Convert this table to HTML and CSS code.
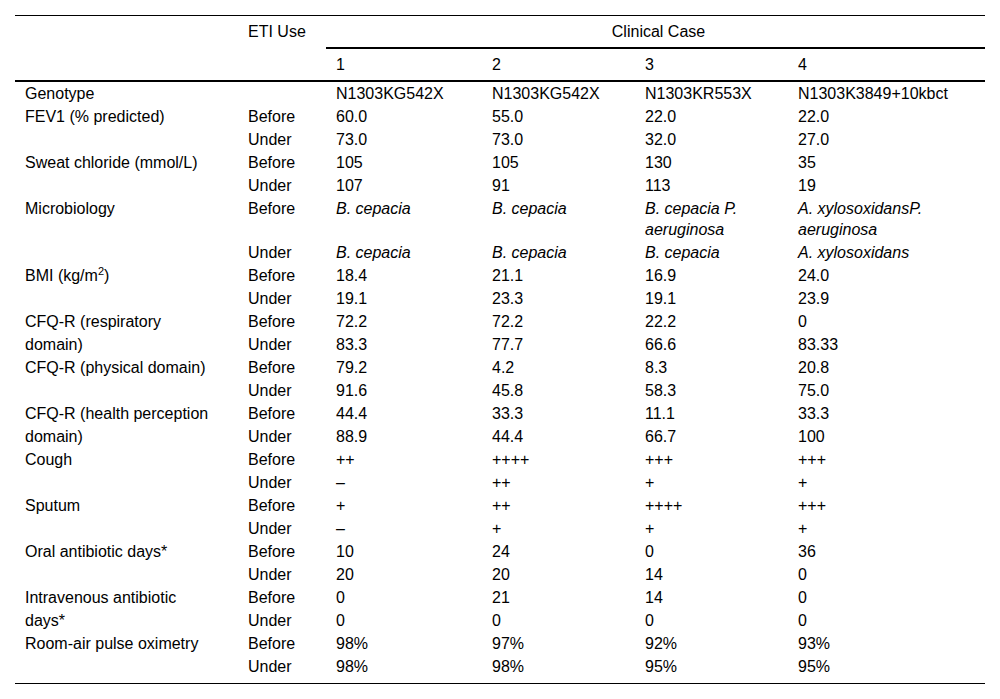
FILE: index.html
```html
<!DOCTYPE html>
<html>
<head>
<meta charset="utf-8">
<link rel="stylesheet" href="styles.css">
</head>
<body>
<div class="wrap">
<table class="data">
  <colgroup>
    <col class="c1"><col class="c2"><col class="c3"><col class="c4"><col class="c5"><col class="c6">
  </colgroup>
  <thead>
    <tr>
      <th rowspan="2" class="hcell"></th>
      <th rowspan="2" class="hcell">ETI Use</th>
      <th colspan="4" class="hcell case">Clinical Case</th>
    </tr>
    <tr>
      <th class="hcell num">1</th>
      <th class="hcell num">2</th>
      <th class="hcell num">3</th>
      <th class="hcell num">4</th>
    </tr>
  </thead>
  <tbody>
    <tr><td>Genotype</td><td></td><td>N1303KG542X</td><td>N1303KG542X</td><td>N1303KR553X</td><td>N1303K3849+10kbct</td></tr>

    <tr><td rowspan="2">FEV1 (% predicted)</td><td>Before</td><td>60.0</td><td>55.0</td><td>22.0</td><td>22.0</td></tr>
    <tr><td>Under</td><td>73.0</td><td>73.0</td><td>32.0</td><td>27.0</td></tr>

    <tr><td rowspan="2">Sweat chloride (mmol/L)</td><td>Before</td><td>105</td><td>105</td><td>130</td><td>35</td></tr>
    <tr><td>Under</td><td>107</td><td>91</td><td>113</td><td>19</td></tr>

    <tr><td rowspan="2">Microbiology</td><td>Before</td><td><i>B. cepacia</i></td><td><i>B. cepacia</i></td><td><i>B. cepacia P.<br>aeruginosa</i></td><td><i>A. xylosoxidansP.<br>aeruginosa</i></td></tr>
    <tr><td>Under</td><td><i>B. cepacia</i></td><td><i>B. cepacia</i></td><td><i>B. cepacia</i></td><td><i>A. xylosoxidans</i></td></tr>

    <tr><td rowspan="2">BMI (kg/m<sup>2</sup>)</td><td>Before</td><td>18.4</td><td>21.1</td><td>16.9</td><td>24.0</td></tr>
    <tr><td>Under</td><td>19.1</td><td>23.3</td><td>19.1</td><td>23.9</td></tr>

    <tr><td rowspan="2" class="wrapcell">CFQ-R (respiratory<br>domain)</td><td>Before</td><td>72.2</td><td>72.2</td><td>22.2</td><td>0</td></tr>
    <tr><td>Under</td><td>83.3</td><td>77.7</td><td>66.6</td><td>83.33</td></tr>

    <tr><td rowspan="2">CFQ-R (physical domain)</td><td>Before</td><td>79.2</td><td>4.2</td><td>8.3</td><td>20.8</td></tr>
    <tr><td>Under</td><td>91.6</td><td>45.8</td><td>58.3</td><td>75.0</td></tr>

    <tr><td rowspan="2" class="wrapcell">CFQ-R (health perception<br>domain)</td><td>Before</td><td>44.4</td><td>33.3</td><td>11.1</td><td>33.3</td></tr>
    <tr><td>Under</td><td>88.9</td><td>44.4</td><td>66.7</td><td>100</td></tr>

    <tr><td rowspan="2">Cough</td><td>Before</td><td>++</td><td>++++</td><td>+++</td><td>+++</td></tr>
    <tr><td>Under</td><td>–</td><td>++</td><td>+</td><td>+</td></tr>

    <tr><td rowspan="2">Sputum</td><td>Before</td><td>+</td><td>++</td><td>++++</td><td>+++</td></tr>
    <tr><td>Under</td><td>–</td><td>+</td><td>+</td><td>+</td></tr>

    <tr><td rowspan="2">Oral antibiotic days*</td><td>Before</td><td>10</td><td>24</td><td>0</td><td>36</td></tr>
    <tr><td>Under</td><td>20</td><td>20</td><td>14</td><td>0</td></tr>

    <tr><td rowspan="2" class="wrapcell">Intravenous antibiotic<br>days*</td><td>Before</td><td>0</td><td>21</td><td>14</td><td>0</td></tr>
    <tr><td>Under</td><td>0</td><td>0</td><td>0</td><td>0</td></tr>

    <tr><td rowspan="2">Room-air pulse oximetry</td><td>Before</td><td>98%</td><td>97%</td><td>92%</td><td>93%</td></tr>
    <tr class="last"><td>Under</td><td>98%</td><td>98%</td><td>95%</td><td>95%</td></tr>
  </tbody>
</table>
</div>
</body>
</html>
```

FILE: styles.css
```css
html, body {
  margin: 0;
  padding: 0;
  background: #fff;
}

.wrap {
  padding: 15px;
}

.data {
  width: 970px;
  table-layout: fixed;
  border-collapse: separate;
  border-spacing: 0;
  border-top: 1px solid #000;
  border-bottom: 1px solid #000;
  font-family: "Liberation Sans", Arial, sans-serif;
  font-size: 16px;
  color: #000;
}

.c1 { width: 223px; }
.c2 { width: 88px; }
.c3 { width: 156px; }
.c4 { width: 153px; }
.c5 { width: 153px; }
.c6 { width: 197px; }

.data th,
.data td {
  text-align: left;
  font-weight: normal;
  vertical-align: top;
  padding: 1px 4px 1px 10px;
  line-height: 21px;
  white-space: nowrap;
}

.data th.hcell {
  padding-top: 5px;
  padding-bottom: 5px;
}

.data thead tr:last-child th,
.data thead th[rowspan] {
  border-bottom: 2px solid #000;
}

.data th.case {
  text-align: center;
  border-bottom: 2px solid #000;
}

.data td.wrapcell {
  line-height: 23px;
  padding-top: 0;
  padding-bottom: 0;
}

.data tr.last td {
  padding-bottom: 6px;
}

.data sup {
  font-size: 11px;
  line-height: 0;
  vertical-align: 6px;
}
```
